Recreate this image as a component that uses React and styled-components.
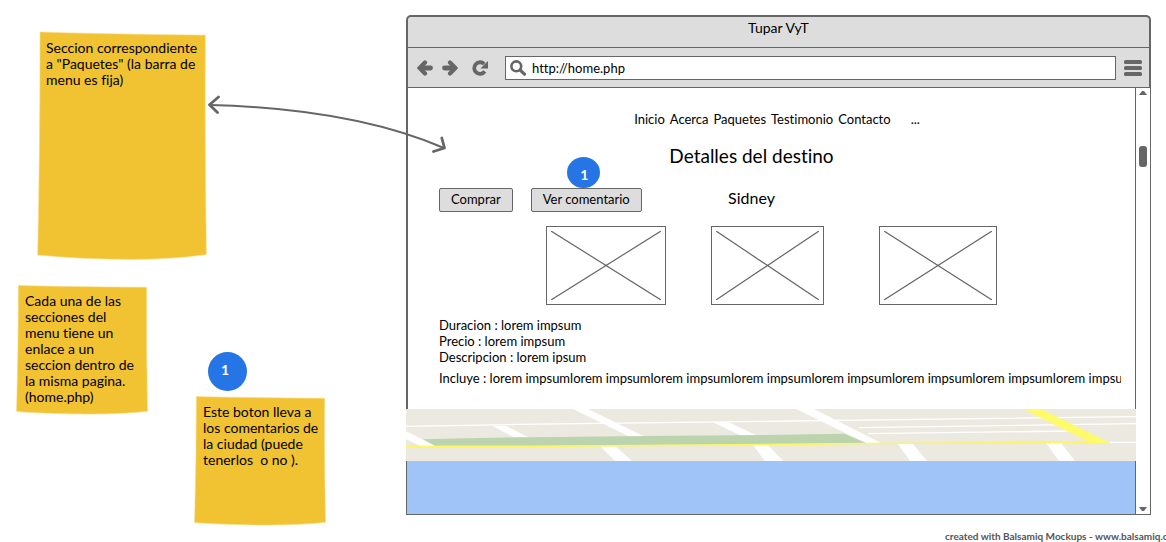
import React from "react";
import styled, { createGlobalStyle } from "styled-components";

const INK = "#666666";
const CHROME = "#dddddd";

const GlobalStyle = createGlobalStyle`
  *, *::before, *::after { box-sizing: border-box; }
  body {
    margin: 0;
    background: #ffffff;
    color: #000000;
    font-family: Lato, "Open Sans", sans-serif;
    font-size: 13px;
    font-variant-ligatures: none;
    line-height: 16px;
    overflow-x: hidden;
  }
  h1, h2, p, ul { margin: 0; padding: 0; font-weight: 400; }
`;

const Board = styled.div`
  position: relative;
  display: flex;
  align-items: flex-start;
  padding: 15px 15px 0 0;
`;

const NotesColumn = styled.aside`
  flex: 0 0 406px;
  padding: 16px 0 0 16px;
`;

const NotesRow = styled.div`
  display: flex;
  align-items: flex-start;
  gap: 46px;
  margin-top: 24px;
`;

const NoteGroup = styled.div`
  padding-top: 67px;
`;

const NoteBox = styled.article`
  position: relative;
  width: ${(p) => (p.$large ? "170px" : "132px")};
  min-height: ${(p) => (p.$large ? "230px" : "130px")};
  margin-left: ${(p) => (p.$large ? "21px" : "0")};
  padding: ${(p) => (p.$large ? "9px" : "8px")} 0 0 9px;
`;

const NotePaper = styled.svg`
  position: absolute;
  inset: 0;
  width: 100%;
  height: 100%;
`;

const NoteText = styled.p`
  position: relative;
  font-size: 14px;
  white-space: pre;
`;

const Marker = styled.span`
  display: flex;
  align-items: center;
  justify-content: center;
  width: ${(p) => (p.$small ? "33px" : "39px")};
  height: ${(p) => (p.$small ? "31px" : "39px")};
  padding: ${(p) => (p.$small ? "4px 0 0 2px" : "0 5px 3px 0")};
  border-radius: 50%;
  background: #2575e6;
  color: #ffffff;
  font-size: 14px;
  font-weight: 700;
`;

const GroupMarker = styled(Marker)`
  margin: 0 0 5px 14px;
`;

const Browser = styled.main`
  flex: 1;
  min-width: 0;
`;

const Chrome = styled.header`
  border: 2px solid ${INK};
  border-bottom: 0;
  border-radius: 5px 5px 0 0;
  background: ${CHROME};
`;

const TitleBar = styled.div`
  height: 31px;
  padding-top: 3px;
  border-bottom: 1px solid ${INK};
  font-size: 14px;
  text-align: center;
`;

const Toolbar = styled.div`
  display: flex;
  align-items: center;
  height: 40px;
  padding: 0 7px 0 9px;
  border-bottom: 1px solid ${INK};
`;

const ToolButton = styled.button`
  display: flex;
  padding: 0;
  margin-right: ${(p) => p.$gap || 0}px;
  border: 0;
  background: none;
  color: ${INK};
`;

const Address = styled.label`
  flex: 1;
  min-width: 0;
  display: flex;
  align-items: center;
  gap: 6px;
  height: 24px;
  margin-right: 8px;
  padding-left: 4px;
  border: 1px solid ${INK};
  background: #ffffff;
  color: ${INK};
`;

const AddressInput = styled.input`
  flex: 1;
  min-width: 0;
  padding: 1px 0 0;
  border: 0;
  outline: 0;
  background: none;
  color: #000000;
  font: inherit;
`;

const Viewport = styled.div`
  display: flex;
  border-bottom: 1px solid ${INK};
`;

const Page = styled.div`
  flex: 1;
  min-width: 0;
`;

const Content = styled.section`
  min-height: 321px;
  border-left: 2px solid ${INK};
  border-right: 1px solid ${INK};
`;

const Menu = styled.nav`
  display: flex;
  justify-content: center;
  gap: 5px;
  padding: 23px 0 0 11px;
`;

const MenuLink = styled.a`
  color: inherit;
  text-decoration: none;
  margin-left: ${(p) => (p.$apart ? "15px" : "0")};
`;

const Heading = styled.div`
  padding: 19px 71px 0 31px;
`;

const Title = styled.h1`
  font-size: 19px;
  line-height: 20px;
  text-align: center;
`;

const ActionRow = styled.div`
  display: grid;
  grid-template-columns: 1fr auto 1fr;
  margin-top: 22px;
`;

const Actions = styled.div`
  display: flex;
  gap: 18px;
`;

const ButtonSlot = styled.div`
  position: relative;
`;

const ActionButton = styled.button`
  height: 24px;
  padding: 0 11px 2px;
  border: 1px solid ${INK};
  border-radius: 2px;
  background: ${CHROME};
  color: #000000;
  font: inherit;
  white-space: nowrap;
`;

const ButtonMarker = styled(Marker)`
  position: absolute;
  left: 36px;
  bottom: 100%;
`;

const City = styled.h2`
  font-size: 16px;
  line-height: 20px;
`;

const Gallery = styled.div`
  display: flex;
  justify-content: center;
  margin-top: 14px;
`;

const Photo = styled.svg`
  width: ${(p) => p.$width}px;
  height: 79px;
  margin-left: ${(p) => p.$gap || 0}px;
  padding: 4px;
  border: 1px solid ${INK};
`;

const Details = styled.div`
  padding: 12px 14px 0 31px;
`;

const DetailLine = styled.p`
  margin-top: ${(p) => (p.$spaced ? "5px" : "0")};
  padding-bottom: ${(p) => (p.$spaced ? "3px" : "0")};
  overflow: ${(p) => (p.$spaced ? "hidden" : "visible")};
  white-space: nowrap;
`;

const MapArt = styled.svg`
  display: block;
  width: 100%;
  height: 52px;
  background: #ebe9e0;
`;

const Sea = styled.div`
  height: 53px;
  border: solid ${INK};
  border-width: 0 1px;
  background: #a0c3f8;
`;

const ScrollTrack = styled.div`
  display: flex;
  flex-direction: column;
  align-items: center;
  width: 15px;
  padding: 3px 0;
  border-right: 1px solid ${INK};
`;

const ScrollThumb = styled.div`
  width: 8px;
  height: 21px;
  margin: 51px 0 auto;
  border-radius: 3px;
  background: ${INK};
`;

const Credit = styled.footer`
  width: 221px;
  margin: 4px 0 0 auto;
  overflow: hidden;
  color: #555555;
  font-size: 10px;
  font-weight: 700;
  line-height: 12px;
  white-space: nowrap;
`;

const Connector = styled.svg`
  position: absolute;
  left: 200px;
  top: 90px;
  pointer-events: none;
`;

function Note({ large, children }) {
  return (
    <NoteBox $large={large}>
      <NotePaper viewBox="0 0 100 100" preserveAspectRatio="none" aria-hidden="true">
        <path
          d="M1.8 0.4 Q30 1.2 99 1.8 Q98.6 50 99.6 97.2 Q80 99.3 56 99.3 Q25 99.2 0.4 97.4 Q1.8 50 1.8 0.4Z"
          fill="#f1c232"
          stroke="#f7dc85"
          strokeWidth="0.6"
          vectorEffect="non-scaling-stroke"
        />
      </NotePaper>
      <NoteText>{children}</NoteText>
    </NoteBox>
  );
}

function ArrowIcon({ flip }) {
  return (
    <svg width="16" height="16" viewBox="0 0 16 16" aria-hidden="true">
      <g
        transform={flip ? "matrix(-1 0 0 1 16 0)" : undefined}
        fill="none"
        stroke="currentColor"
        strokeLinecap="round"
      >
        <path d="M8 2.5 2.6 8 8 13.5" strokeWidth="4.2" strokeLinejoin="miter" />
        <path d="M4 8h9.5" strokeWidth="4.8" />
      </g>
    </svg>
  );
}

function ReloadIcon() {
  return (
    <svg width="16" height="16" viewBox="0 0 16 16" aria-hidden="true">
      <path d="M12.2 4A5.8 5.8 0 1 0 12.8 11.4" fill="none" stroke="currentColor" strokeWidth="3.8" strokeLinecap="butt" />
      <path d="M16 1v7.4H8.4z" fill="currentColor" />
    </svg>
  );
}

function SearchIcon() {
  return (
    <svg width="16" height="16" viewBox="0 0 16 16" aria-hidden="true">
      <circle cx="6.3" cy="6.3" r="4.9" fill="none" stroke="currentColor" strokeWidth="2.6" />
      <path d="M10.2 10.2 14.4 14.2" stroke="currentColor" strokeWidth="3.2" strokeLinecap="round" />
    </svg>
  );
}

function MenuIcon() {
  return (
    <svg width="18" height="16" viewBox="0 0 18 16" fill="currentColor" aria-hidden="true">
      <rect width="18" height="4" rx="1.6" />
      <rect y="6" width="18" height="4" rx="1.6" />
      <rect y="12" width="18" height="4" rx="1.6" />
    </svg>
  );
}

function Placeholder({ width, gap }) {
  return (
    <Photo $width={width} $gap={gap} viewBox="0 0 100 100" preserveAspectRatio="none" role="img" aria-label="Foto">
      <path d="M0 0 100 100M100 0 0 100" stroke={INK} strokeWidth="1.2" fill="none" vectorEffect="non-scaling-stroke" />
    </Photo>
  );
}

function StreetMap() {
  return (
    <MapArt viewBox="0 0 730 52" preserveAspectRatio="none" role="img" aria-label="Mapa">
      <g stroke="#ffffff" strokeWidth="1.3" fill="none">
        <path d="M0 17.3 130 15.2 384 12 730 7.6" />
        <path d="M453 18.7 730 14.7" />
        <path d="M462 24.7 665 22" />
        <path d="M700 33.4H730" />
      </g>
      <g fill="#ffffff">
        <path d="M167 0H182L239 28H224Z" />
        <path d="M87 17H100L122 28H107Z" />
        <path d="M0 22 29 37H14L0 30Z" />
        <path d="M194 37H209L226 52H209Z" />
        <path d="M306 13H322L352 27H336Z" />
        <path d="M347 36H362L377 52H359Z" />
        <path d="M390 0H408L475 34H460Z" />
        <path d="M492 35H507L521 52H504Z" />
        <path d="M640 34H655L669 52H653Z" />
      </g>
      <path d="M17 30.3 50 29.4 100 28.4 240 27 360 26 438 24.7 460 34 384 35 130 36.7H29Z" fill="#bcd4ae" />
      <path d="M0 37.5H110L384 35.4 460 34.5 704 33.4" fill="none" stroke="#fdf65f" strokeWidth="1.6" />
      <path d="M617 0H635L704 34H685Z" fill="#fefa69" />
    </MapArt>
  );
}

function ScrollArrow({ down }) {
  return (
    <svg width="8" height="4" viewBox="0 0 8 4" aria-hidden="true">
      <path d={down ? "M0 0h8L5 4H3z" : "M0 4h8L5 0H3z"} fill={INK} />
    </svg>
  );
}

const lorem = "lorem impsum".repeat(9);

export default function App() {
  return (
    <>
      <GlobalStyle />
      <Board>
        <NotesColumn>
          <Note large>{"Seccion correspondiente\na \"Paquetes\" (la barra de\nmenu es fija)"}</Note>
          <NotesRow>
            <Note>
              {"Cada una de las\nsecciones del\nmenu tiene un\nenlace a un\nseccion dentro de\nla misma pagina.\n(home.php)"}
            </Note>
            <NoteGroup>
              <GroupMarker>1</GroupMarker>
              <Note>{"Este boton lleva a\nlos comentarios de\nla ciudad (puede\ntenerlos  o no )."}</Note>
            </NoteGroup>
          </NotesRow>
        </NotesColumn>

        <Browser>
          <Chrome>
            <TitleBar>Tupar VyT</TitleBar>
            <Toolbar>
              <ToolButton $gap={9} aria-label="Atrás"><ArrowIcon /></ToolButton>
              <ToolButton $gap={14} aria-label="Adelante"><ArrowIcon flip /></ToolButton>
              <ToolButton $gap={17} aria-label="Recargar"><ReloadIcon /></ToolButton>
              <Address>
                <SearchIcon />
                <AddressInput type="text" aria-label="Dirección" defaultValue="http://home.php" />
              </Address>
              <ToolButton aria-label="Menú"><MenuIcon /></ToolButton>
            </Toolbar>
          </Chrome>

          <Viewport>
            <Page>
              <Content>
                <Menu>
                  <MenuLink href="#inicio">Inicio</MenuLink>
                  <MenuLink href="#acerca">Acerca</MenuLink>
                  <MenuLink href="#paquetes">Paquetes</MenuLink>
                  <MenuLink href="#testimonio">Testimonio</MenuLink>
                  <MenuLink href="#contacto">Contacto</MenuLink>
                  <MenuLink href="#mas" $apart>...</MenuLink>
                </Menu>
                <Heading>
                  <Title>Detalles del destino</Title>
                  <ActionRow>
                    <Actions>
                      <ActionButton type="button">Comprar</ActionButton>
                      <ButtonSlot>
                        <ActionButton type="button">Ver comentario</ActionButton>
                        <ButtonMarker $small>1</ButtonMarker>
                      </ButtonSlot>
                    </Actions>
                    <City>Sidney</City>
                  </ActionRow>
                </Heading>
                <Gallery>
                  <Placeholder width={120} />
                  <Placeholder width={113} gap={45} />
                  <Placeholder width={118} gap={55} />
                </Gallery>
                <Details>
                  <DetailLine>Duracion : lorem impsum</DetailLine>
                  <DetailLine>Precio : lorem impsum</DetailLine>
                  <DetailLine>Descripcion : lorem ipsum</DetailLine>
                  <DetailLine $spaced>Incluye : {lorem}</DetailLine>
                </Details>
              </Content>
              <StreetMap />
              <Sea />
            </Page>
            <ScrollTrack>
              <ScrollArrow />
              <ScrollThumb />
              <ScrollArrow down />
            </ScrollTrack>
          </Viewport>
        </Browser>

        <Connector width="250" height="70" viewBox="200 90 250 70" aria-hidden="true">
          <g fill="none" stroke={INK} strokeLinecap="round" strokeLinejoin="round">
            <path d="M210 105Q352 108.5 444 148" strokeWidth="2" />
            <path d="M218.5 97 209.5 104.8 217.5 112.5M441.8 138 444.5 148 433.5 151.5" strokeWidth="2.8" />
          </g>
        </Connector>
      </Board>
      <Credit>created with Balsamiq Mockups - www.balsamiq.com</Credit>
    </>
  );
}
